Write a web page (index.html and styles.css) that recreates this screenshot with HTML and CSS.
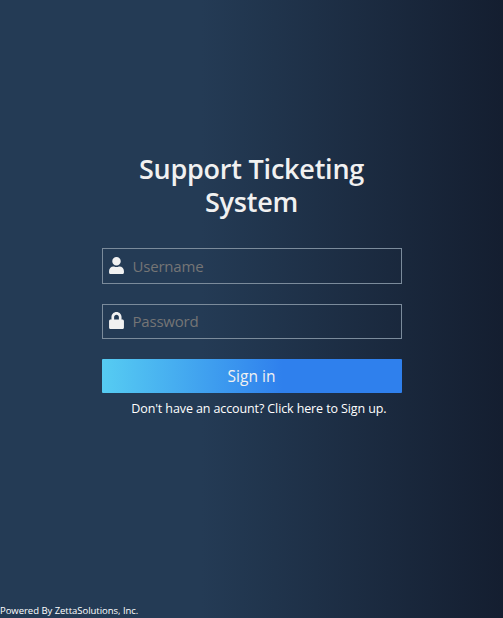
FILE: index.html
```html
<!DOCTYPE html>
<html lang="en">
<head>
<meta charset="utf-8">
<title>Support Ticketing System</title>
<link rel="stylesheet" href="styles.css">
</head>
<body>
<main class="login">
  <h1 class="title">Support Ticketing System</h1>
  <form class="form">
    <label class="field field-user">
      <svg class="icon" viewBox="0 0 448 512"><path d="M224 256c70.700 0 128-57.300 128-128S294.700 0 224 0 96 57.300 96 128s57.300 128 128 128zm89.600 32h-16.700c-22.200 10.200-46.900 16-72.900 16s-50.600-5.800-72.900-16h-16.700C60.200 288 0 348.200 0 422.400V464c0 26.500 21.500 48 48 48h352c26.500 0 48-21.500 48-48v-41.600c0-74.200-60.200-134.400-134.400-134.400z"/></svg>
      <input class="input" type="text" placeholder="Username">
    </label>
    <label class="field field-password">
      <svg class="icon" viewBox="0 0 448 512"><path d="M400 224h-24v-72C376 68.200 307.800 0 224 0S72 68.200 72 152v72H48c-26.500 0-48 21.500-48 48v192c0 26.500 21.500 48 48 48h352c26.500 0 48-21.500 48-48V272c0-26.500-21.500-48-48-48zm-104 0H152v-72c0-39.700 32.300-72 72-72s72 32.300 72 72v72z"/></svg>
      <input class="input" type="password" placeholder="Password">
    </label>
    <button class="submit" type="button">Sign in</button>
  </form>
  <a class="signup">Don't have an account? Click here to Sign up.</a>
</main>
<footer class="footer">Powered By ZettaSolutions, Inc.</footer>
</body>
</html>
```
FILE: styles.css
```css
* { box-sizing: border-box; }
body {
  margin: 0;
  height: 100vh;
  display: flex;
  flex-direction: column;
  align-items: center;
  overflow: hidden;
  background: linear-gradient(to right, #243b55 40%, #141e30);
  color: #fff;
  font-family: "Segoe UI", "Open Sans", "Noto Sans", sans-serif;
}
.login {
  width: 300px;
  padding-top: 152px;
  display: flex;
  flex-direction: column;
}
.title {
  margin: 0 0 30px;
  font-size: 27px;
  line-height: 33px;
  font-weight: 600;
  letter-spacing: -0.22px;
  text-align: center;
  color: #f1f1f1;
}
.form { display: flex; flex-direction: column; }
.field {
  display: flex;
  align-items: center;
  height: 36px;
  margin-bottom: 20px;
  padding-left: 6px;
  border: 1px solid #7b8b9b;
}
.field-password { height: 35px; }
.icon {
  width: 15px;
  height: 17px;
  margin-bottom: 2px;
  flex: none;
  fill: #f1f1f1;
}
.input {
  flex: 1;
  min-width: 0;
  height: 100%;
  margin-left: 9px;
  padding: 0;
  border: 0;
  outline: 0;
  background: none;
  color: #fff;
  font: 15px "Segoe UI", "Open Sans", "Noto Sans", sans-serif;
  letter-spacing: -0.2px;
}
.field-password .input { padding-bottom: 1px; }
.input::placeholder { color: #757575; }
.submit {
  height: 34px;
  padding: 0;
  border: 0;
  border-radius: 1px;
  background: linear-gradient(to right, #56ccf2, #2f80ed 60%);
  color: #f1f1f1;
  font: 15.5px "Segoe UI", "Open Sans", "Noto Sans", sans-serif;
  letter-spacing: 0;
}
.signup {
  margin: 6px 15px 0 0;
  align-self: flex-end;
  font-size: 12.5px;
  line-height: 19px;
  letter-spacing: -0.11px;
  white-space: nowrap;
}
.footer {
  margin-top: auto;
  align-self: flex-start;
  font-size: 9.500px;
  line-height: 14px;
  letter-spacing: -0.03px;
}
```
